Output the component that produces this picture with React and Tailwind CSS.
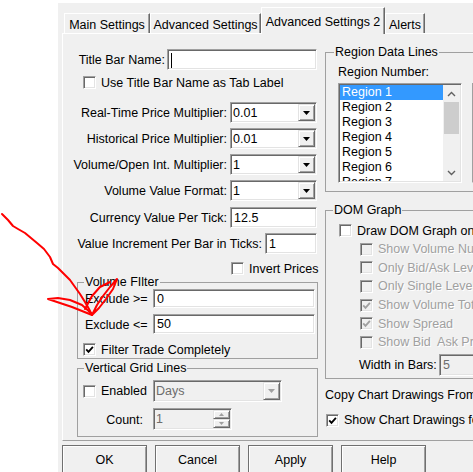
const sunken =
  "border border-t-[#a0a0a0] border-l-[#a0a0a0] border-r-white border-b-white shadow-[inset_1px_1px_0_#696969,inset_-1px_-1px_0_#e3e3e3]";
const raised =
  "border border-t-[#e3e3e3] border-l-[#e3e3e3] border-r-[#696969] border-b-[#696969] shadow-[inset_1px_1px_0_#fff,inset_-1px_-1px_0_#a0a0a0]";
const greyText = "text-[#a0a0a0] [text-shadow:1px_1px_0_#fff]";

function Check({ checked, disabled }) {
  return (
    <span
      className={`w-[13px] h-[13px] shrink-0 flex items-center justify-center ${sunken} ${
        disabled ? "bg-[#f0f0f0]" : "bg-white"
      }`}
    >
      {checked && (
        <svg width="9" height="9" viewBox="0 0 9 9">
          <path d="M1.2 4.3L3.5 6.8L7.9 1.8" fill="none" stroke={disabled ? "#a0a0a0" : "#000"} strokeWidth="1.8" />
        </svg>
      )}
    </span>
  );
}

function CheckRow({ label, checked, disabled, className = "" }) {
  return (
    <div className={`h-[13px] flex items-center gap-[5px] whitespace-pre ${className}`}>
      <Check checked={checked} disabled={disabled} />
      <span className={`pt-[1px] ${disabled ? greyText : ""}`}>{label}</span>
    </div>
  );
}

function TextBox({ value, className = "", disabled, caret }) {
  return (
    <div
      className={`${sunken} ${className} flex items-center pl-[3px] pt-[1px] ${
        disabled ? "bg-[#f0f0f0] text-[#6d6d6d]" : "bg-white"
      }`}
    >
      {caret && <span className="w-[1px] h-[15px] bg-black" />}
      {value}
    </div>
  );
}

function Arrow({ color = "#000" }) {
  return (
    <svg width="7" height="4" viewBox="0 0 7 4">
      <path d="M0 0H7L3.5 4Z" fill={color} />
    </svg>
  );
}

function Combo({ value, className = "", disabled }) {
  return (
    <div className={`${sunken} ${className} flex ${disabled ? "bg-[#f0f0f0] text-[#6d6d6d]" : "bg-white"}`}>
      <span className="flex-1 pl-[2px] pt-[1px] flex items-center">{value}</span>
      <span className={`w-[17px] m-[1px] flex items-center justify-center bg-[#f0f0f0] ${raised}`}>
        <Arrow color={disabled ? "#a0a0a0" : "#000"} />
      </span>
    </div>
  );
}

function Spin({ value, className = "" }) {
  return (
    <div className={`${sunken} ${className} flex bg-[#f0f0f0] text-[#6d6d6d]`}>
      <span className="flex-1 pl-[2px] pt-[1px] flex items-center">{value}</span>
      <span className="w-[17px] m-[1px] flex flex-col">
        <span className={`flex-1 flex items-center justify-center ${raised}`}>
          <svg width="5" height="3" viewBox="0 0 5 3">
            <path d="M0 3H5L2.5 0Z" fill="#a0a0a0" />
          </svg>
        </span>
        <span className={`flex-1 flex items-center justify-center ${raised}`}>
          <svg width="5" height="3" viewBox="0 0 5 3">
            <path d="M0 0H5L2.5 3Z" fill="#a0a0a0" />
          </svg>
        </span>
      </span>
    </div>
  );
}

function Group({ title, className = "", legendClass = "", children }) {
  return (
    <fieldset className={`border border-[#a0a0a0] ${className}`}>
      <legend className={`px-[1px] leading-[14px] ${legendClass}`}>{title}</legend>
      {children}
    </fieldset>
  );
}

function LabelRow({ label, children, className = "", gap = "gap-[3px]" }) {
  return (
    <div className={`w-[254px] flex items-center justify-end ${gap} ${className}`}>
      <span className="whitespace-nowrap pt-[2px]">{label}</span>
      {children}
    </div>
  );
}

function Tab({ children, className, active }) {
  return (
    <div
      className={`${className} shrink-0 bg-[#f0f0f0] border-l border-t border-r border-l-white border-t-white border-r-[#696969] shadow-[inset_-1px_0_0_#a0a0a0] text-center whitespace-nowrap ${
        active ? "h-[27px] pt-[7px] -mb-[1px] relative z-10" : "h-[20px] pt-[4px]"
      }`}
    >
      {children}
    </div>
  );
}

function Chevron({ up }) {
  return (
    <svg width="9" height="6" viewBox="0 0 9 6">
      <path d={up ? "M1 5L4.5 1.5L8 5" : "M1 1L4.5 4.5L8 1"} fill="none" stroke="#606060" strokeWidth="1.4" />
    </svg>
  );
}

function Btn({ children }) {
  return (
    <div className="w-[85px] h-[30px] shrink-0 bg-[#f0f0f0] border border-[#707070] shadow-[inset_1px_1px_0_#fff,inset_-1px_-1px_0_#a0a0a0] flex items-center justify-center">
      {children}
    </div>
  );
}

const regions = ["Region 1", "Region 2", "Region 3", "Region 4", "Region 5", "Region 6", "Region 7", "Region 8"];

export default function App() {
  return (
    <div className="relative w-[473px] h-[472px] overflow-hidden bg-white font-['Liberation_Sans',Arial,sans-serif] text-[12.5px] leading-[15px] text-black">
      <div className="ml-[58px] mt-[3px] w-[560px] h-[469px] bg-[#f0f0f0] pl-[4px] flex flex-col">
        {/* tabs */}
        <div className="h-[30px] shrink-0 pl-[2px] flex items-end">
          <Tab className="w-[86px]">Main Settings</Tab>
          <Tab className="w-[111px]">Advanced Settings</Tab>
          <Tab className="w-[124px]" active>
            Advanced Settings 2
          </Tab>
          <Tab className="w-[40px]">Alerts</Tab>
        </div>

        {/* tab page */}
        <div className="h-[408px] shrink-0 border border-white border-b-[#a0a0a0] border-r-[#a0a0a0] flex">
          {/* left column */}
          <div className="w-[254px] shrink-0 flex flex-col">
            <LabelRow label="Title Bar Name:" gap="gap-[2px]" className="mt-[15px]">
              <TextBox caret className="w-[150px] h-[21px]" />
            </LabelRow>
            <CheckRow label="Use Title Bar Name as Tab Label" className="mt-[6px] pl-[20px]" />

            <LabelRow label="Real-Time Price Multiplier:" className="mt-[13px]">
              <Combo value="0.01" className="w-[87px] h-[21px]" />
            </LabelRow>
            <LabelRow label="Historical Price Multiplier:" className="mt-[5px]">
              <Combo value="0.01" className="w-[87px] h-[21px]" />
            </LabelRow>
            <LabelRow label="Volume/Open Int. Multiplier:" className="mt-[5px]">
              <Combo value="1" className="w-[87px] h-[21px]" />
            </LabelRow>
            <LabelRow label="Volume Value Format:" className="mt-[5px]">
              <Combo value="1" className="w-[87px] h-[21px]" />
            </LabelRow>
            <LabelRow label="Currency Value Per Tick:" className="mt-[6px]">
              <TextBox value="12.5" className="w-[87px] h-[21px]" />
            </LabelRow>
            <LabelRow label="Value Increment Per Bar in Ticks:" className="mt-[5px]">
              <TextBox value="1" className="w-[52px] h-[21px]" />
            </LabelRow>
            <CheckRow label="Invert Prices" className="mt-[8px] pl-[168px]" />

            <Group title="Volume FIlter" className="ml-[14px] w-[241px] pb-[2px]" legendClass="ml-[6px]">
              <div className="h-[19px] flex items-center">
                <span className="w-[75px] pl-[7px] pt-[2px]">Exclude &gt;=</span>
                <TextBox value="0" className="w-[162px] h-[19px]" />
              </div>
              <div className="mt-[6px] h-[20px] flex items-center">
                <span className="w-[75px] pl-[7px] pt-[2px]">Exclude &lt;=</span>
                <TextBox value="50" className="w-[162px] h-[20px]" />
              </div>
              <CheckRow label="Filter Trade Completely" checked className="mt-[9px] pl-[5px]" />
            </Group>

            <Group title="Vertical Grid Lines" className="mt-[2px] ml-[14px] w-[241px] pb-[6px]" legendClass="ml-[6px]">
              <div className="mt-[5px] h-[22px] flex items-center">
                <div className="w-[75px] pl-[5px]">
                  <CheckRow label="Enabled" />
                </div>
                <Combo value="Days" disabled className="w-[129px] h-[22px]" />
              </div>
              <div className="mt-[6px] h-[22px] flex items-center">
                <span className="w-[75px] pr-[10px] pt-[2px] text-right">Count:</span>
                <Spin value="1" className="w-[79px] h-[22px]" />
              </div>
            </Group>
          </div>

          {/* right column */}
          <div className="ml-[8px] w-[220px] shrink-0 flex flex-col">
            <Group title="Region Data Lines" className="mt-[11px] pb-[8px]" legendClass="ml-[8px]">
              <div className="mt-[6px] pl-[12px]">Region Number:</div>
              <div className="mt-[3px] pl-[12px] flex">
                <div className={`w-[124px] h-[100px] shrink-0 bg-white p-[1px] flex ${sunken}`}>
                  <div className="flex-1 overflow-hidden">
                    {regions.map((r, i) => (
                      <div key={r} className={`h-[15px] pl-[2px] ${i === 0 ? "bg-[#3399ff] text-white" : ""}`}>
                        {r}
                      </div>
                    ))}
                  </div>
                  <div className="w-[17px] bg-[#f0f0f0] flex flex-col">
                    <div className="h-[17px] flex items-center justify-center">
                      <Chevron up />
                    </div>
                    <div className="h-[32px] mx-[1px] bg-[#cdcdcd]" />
                    <div className="flex-1" />
                    <div className="h-[17px] flex items-center justify-center">
                      <Chevron />
                    </div>
                  </div>
                </div>
                <div className={`ml-[10px] w-[60px] h-[100px] shrink-0 bg-white ${sunken}`} />
              </div>
            </Group>

            <Group title="DOM Graph" className="mt-[11px] pb-[2px]" legendClass="ml-[7px]">
              <div className="mt-[7px] flex flex-col gap-[5.67px]">
                <CheckRow label="Draw DOM Graph on Chart" className="pl-[13px]" />
                <CheckRow label="Show Volume Numbers" disabled className="pl-[34px]" />
                <CheckRow label="Only Bid/Ask Levels" disabled className="pl-[34px]" />
                <CheckRow label="Only Single Level" disabled className="pl-[34px]" />
                <CheckRow label="Show Volume Totals" checked disabled className="pl-[34px]" />
                <CheckRow label="Show Spread" checked disabled className="pl-[34px]" />
                <CheckRow label="Show Bid  Ask Prices" disabled className="pl-[34px]" />
              </div>
              <div className="mt-[5px] pl-[33px] h-[22px] flex items-center">
                <span className="w-[80px] pt-[2px]">Width in Bars:</span>
                <TextBox value="5" disabled className="w-[60px] h-[22px]" />
              </div>
            </Group>

            <div className="mt-[9px] whitespace-nowrap">Copy Chart Drawings From Chart</div>
            <CheckRow label="Show Chart Drawings for" checked className="mt-[11px] pl-[1px] gap-[4px]" />
          </div>
        </div>

        {/* dialog buttons */}
        <div className="mt-[4px] shrink-0 flex gap-[8px]">
          <Btn>OK</Btn>
          <Btn>Cancel</Btn>
          <Btn>Apply</Btn>
          <Btn>Help</Btn>
        </div>
      </div>

      {/* hand-drawn red arrow */}
      <svg className="absolute inset-0 pointer-events-none" width="473" height="472" viewBox="0 0 473 472">
        <g fill="none" stroke="#ff0000" strokeWidth="2" strokeLinejoin="round" strokeLinecap="round">
          <path d="M2 214L8 220L13 226L18 229L25 233L31 238L37 243L44 249L50 257L53 264L58 268L65 275L70 280L75 287L80 294L85 302L89 309L92 315" />
          <path d="M92 315L97 305L103 296L110 287L117 279L113 289L106 299L99 308L92 315" />
          <path d="M85 309L92 296L100 287L110 282" />
          <path d="M92 314L82 305L70 300L58 298L48 299L60 303L72 307L82 311L92 315" />
        </g>
      </svg>
    </div>
  );
}
